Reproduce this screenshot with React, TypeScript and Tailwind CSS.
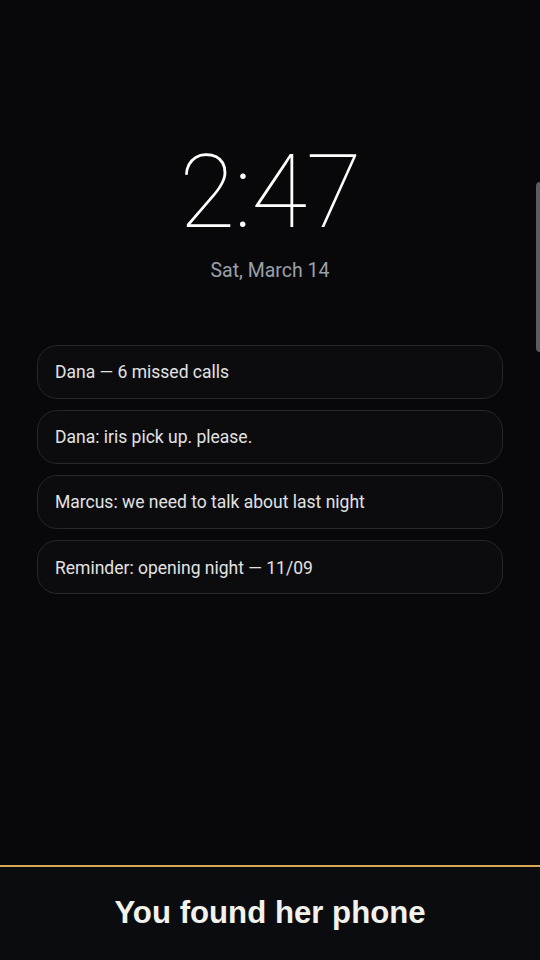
import React from "react";

const notes = [
  "Dana — 6 missed calls",
  "Dana: iris pick up. please.",
  "Marcus: we need to talk about last night",
  "Reminder: opening night — 11/09",
];

export default function App() {
  return (
    <div className="relative flex h-[960px] w-[540px] flex-col overflow-hidden bg-[#08080a]" style={{ fontFamily: "Roboto, 'Noto Sans', sans-serif" }}>
      <div className="flex flex-1 flex-col items-center pt-[141px]">
        <div className="text-[102px] font-thin leading-none tracking-[-1px] text-white">2:47</div>
        <div className="mt-[18px] text-[19.5px] leading-none text-[#9aa0aa]">Sat, March 14</div>
        <div className="mt-[64px] flex w-[466px] flex-col gap-[11.3px]">
          {notes.map((n) => (
            <div key={n} className="flex h-[54px] items-center rounded-[20px] border border-[#26272b] bg-[#0c0c0f] px-[17px] pt-[1px] text-[17.5px] text-[#e2e2e2]">
              {n}
            </div>
          ))}
        </div>
      </div>
      <div className="absolute right-0 top-[182px] h-[170px] w-[4px] rounded-l-full bg-[#5c5c60]" />
      <div className="h-[2px] bg-[#d9a65a]" />
      <div className="flex h-[93px] items-center justify-center bg-[#0b0c10]">
        <span className="text-[31.2px] font-bold text-[#f2f2ec]" style={{ fontFamily: "'Liberation Sans', Arial, sans-serif" }}>You found her phone</span>
      </div>
    </div>
  );
}
